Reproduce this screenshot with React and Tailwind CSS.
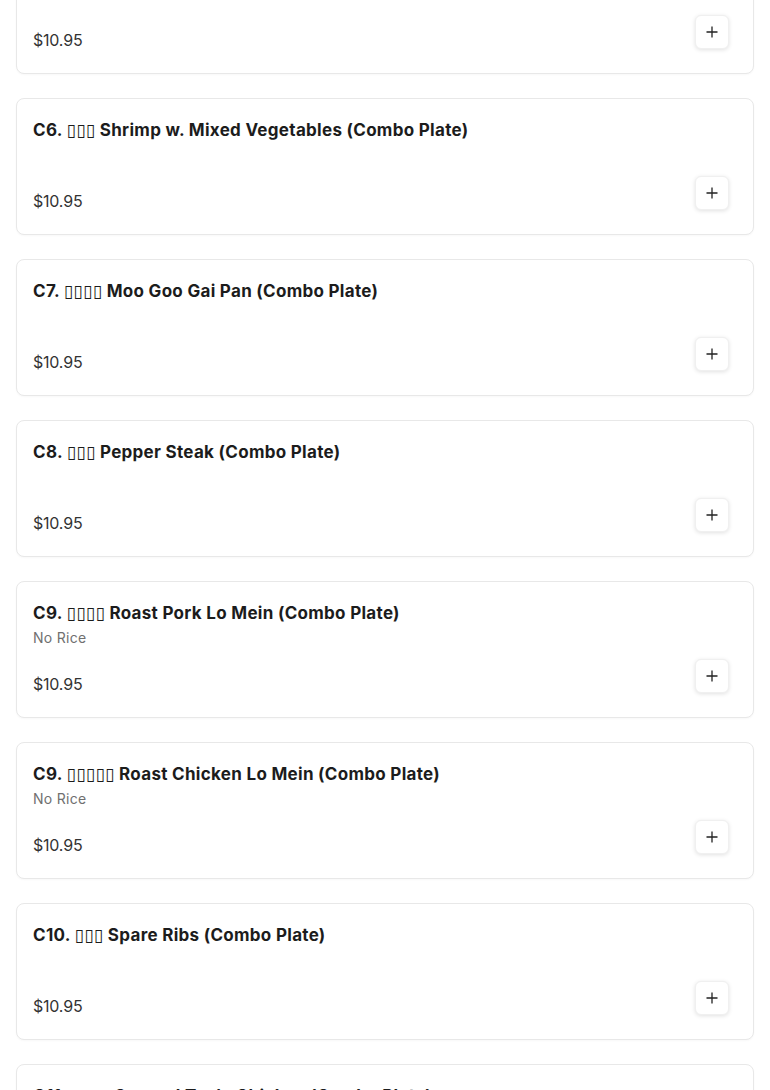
import React from "react";

const items = [
  { title: "C5. ▯▯▯ Chicken w. Broccoli (Combo Plate)", desc: "" },
  { title: "C6. ▯▯▯ Shrimp w. Mixed Vegetables (Combo Plate)", desc: "" },
  { title: "C7. ▯▯▯▯ Moo Goo Gai Pan (Combo Plate)", desc: "" },
  { title: "C8. ▯▯▯ Pepper Steak (Combo Plate)", desc: "" },
  { title: "C9. ▯▯▯▯ Roast Pork Lo Mein (Combo Plate)", desc: "No Rice" },
  { title: "C9. ▯▯▯▯▯ Roast Chicken Lo Mein (Combo Plate)", desc: "No Rice" },
  { title: "C10. ▯▯▯ Spare Ribs (Combo Plate)", desc: "" },
  { title: "C11. ▯▯▯▯ General Tso's Chicken (Combo Plate)", desc: "" },
];

function Plus() {
  return (
    <svg width="12" height="12" viewBox="0 0 12 12" fill="none" stroke="#222" strokeWidth="1.3">
      <path d="M6 0.5v11M0.5 6h11" />
    </svg>
  );
}

export default function App() {
  return (
    <div className="bg-white min-h-screen px-4 overflow-hidden h-[1090px]" style={{ fontFamily: "Inter, 'DejaVu Sans', sans-serif" }}>
      <div className="mt-[-63px] flex flex-col gap-6">
        {items.map((it, i) => (
          <div key={i} className="border border-[#e8e8e8] rounded-lg bg-white pl-4 pr-6 pt-4 pb-[21px] shadow-[0_1px_2px_rgba(0,0,0,0.03)]">
            <div className="text-[17px] leading-7 font-bold text-[#1c1c1c] tracking-[0.3px] pt-[1px]">{it.title}</div>
            <div className="text-[14px] leading-5 h-5 mt-[1px] text-[#707070] tracking-[0.3px]">{it.desc}</div>
            <div className="mt-[11px] flex items-end justify-between">
              <div className="text-[16px] leading-6 text-[#333] tracking-[-0.2px]">$10.95</div>
              <button className="w-[34px] h-[34px] mb-[3px] rounded-md bg-white border border-[#f0f0f0] shadow-[0_1px_4px_rgba(0,0,0,0.12)] flex items-center justify-center">
                <Plus />
              </button>
            </div>
          </div>
        ))}
      </div>
    </div>
  );
}
